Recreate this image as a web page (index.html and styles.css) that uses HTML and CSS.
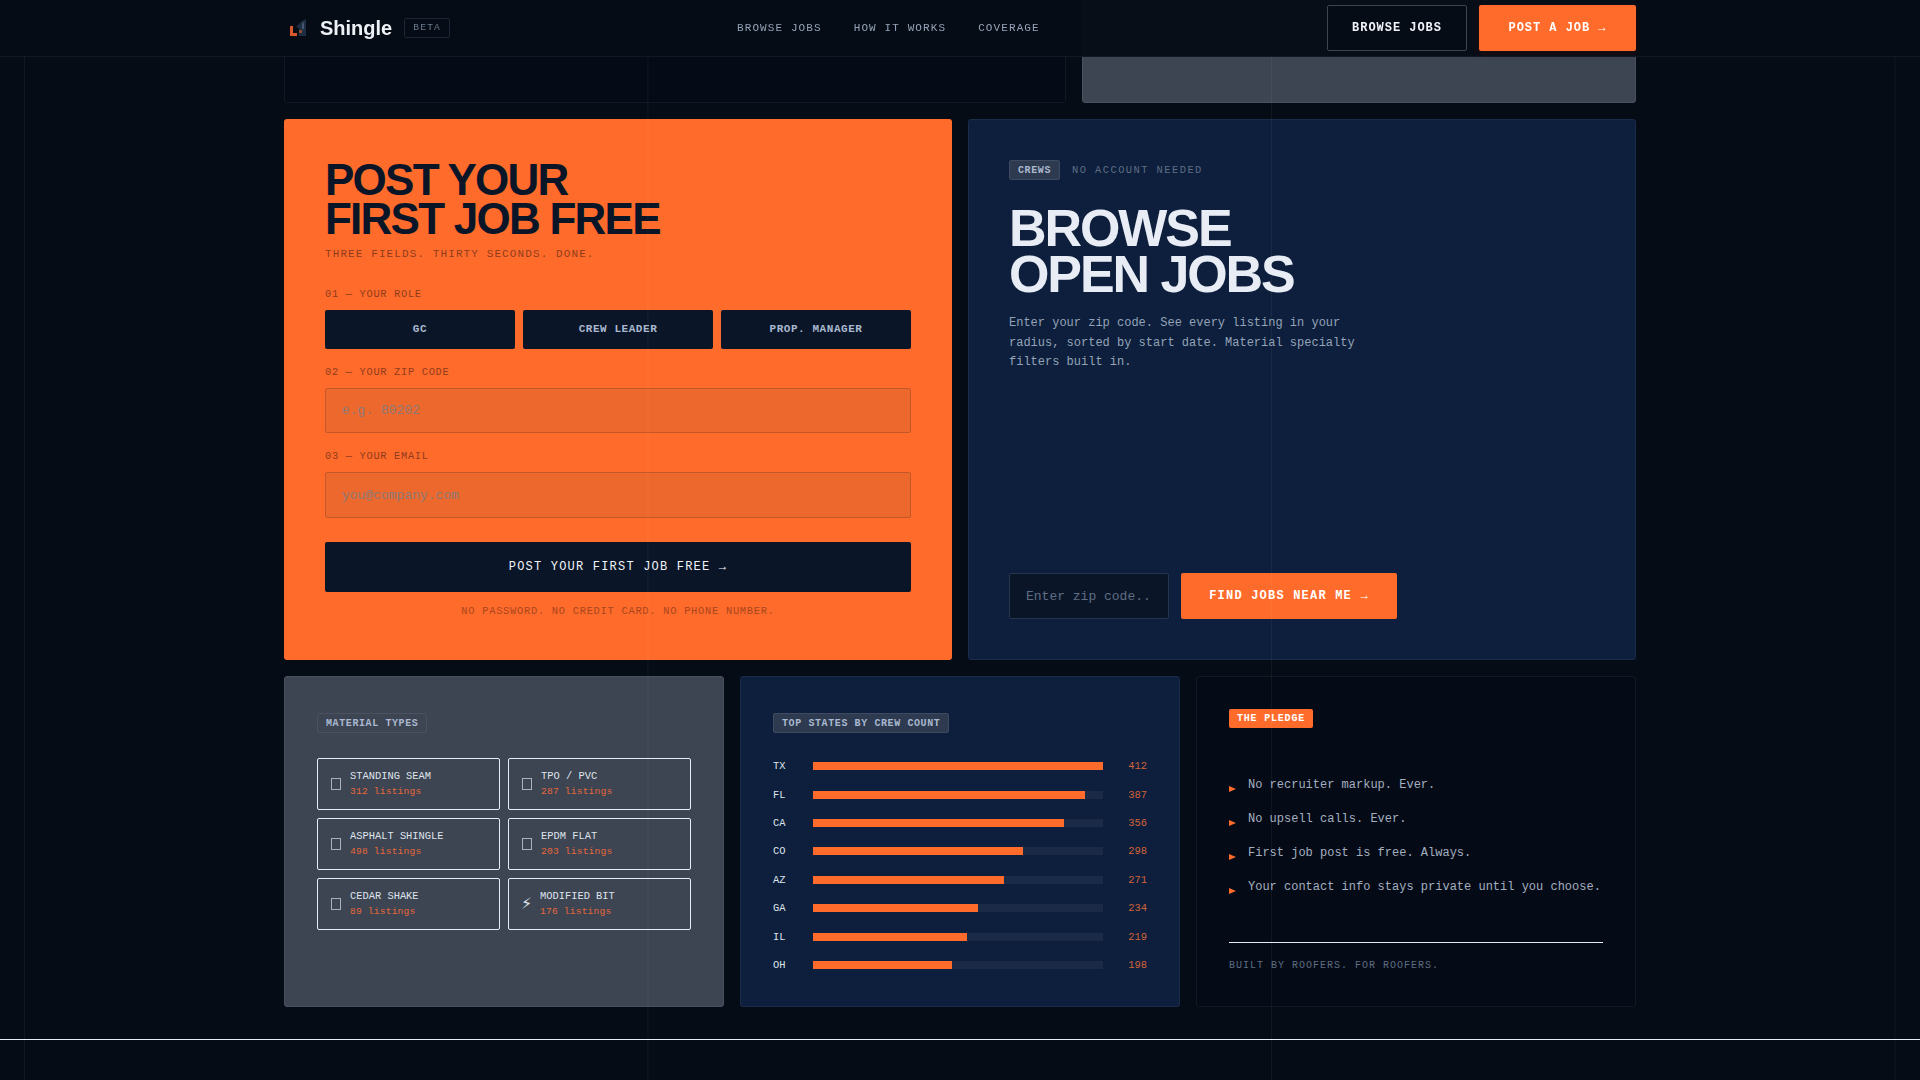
FILE: index.html
```html
<!DOCTYPE html>
<html lang="en">
<head>
  <meta charset="UTF-8" />
  <meta name="viewport" content="width=device-width, initial-scale=1.0" />
  <title>Shingle</title>
  <link rel="stylesheet" href="styles.css">
</head>
<body>
  <div class="grid-lines"></div>

  <nav class="nav">
    <div class="nav-inner">
      <div class="brand">
        <svg class="logo" width="20" height="20" viewBox="0 0 20 20">
          <path d="M8 9 L14 3 L18 1 V18 H11 V10 Z" fill="#1f2d42" />
          <path d="M14 6 L16 4 V11 H14 Z" fill="#46566e" />
          <path d="M2 8 H5 V15 H9 V18 H2 Z" fill="#d9592a" />
          <path d="M11 12 H14 V15 H11 Z" fill="#8a4a2c" />
        </svg>
        <span class="brand-name">Shingle</span>
        <span class="beta">BETA</span>
      </div>
      <div class="nav-links">
        <a>BROWSE JOBS</a>
        <a>HOW IT WORKS</a>
        <a>COVERAGE</a>
      </div>
      <div class="nav-actions">
        <button class="btn btn-outline">BROWSE JOBS</button>
        <button class="btn btn-orange">POST A JOB →</button>
      </div>
    </div>
  </nav>

  <main class="page">
    <section class="row row-stub">
      <div class="card card-dark"></div>
      <div class="card card-gray"></div>
    </section>

    <section class="row row-two">
      <div class="card card-orange">
        <h2 class="post-title">POST YOUR<br>FIRST JOB FREE</h2>
        <p class="post-sub">THREE FIELDS. THIRTY SECONDS. DONE.</p>

        <label class="field-label">01 — YOUR ROLE</label>
        <div class="roles">
          <button>GC</button>
          <button>CREW LEADER</button>
          <button>PROP. MANAGER</button>
        </div>

        <label class="field-label">02 — YOUR ZIP CODE</label>
        <input class="field" type="text" placeholder="e.g. 80202" />

        <label class="field-label">03 — YOUR EMAIL</label>
        <input class="field field-last" type="text" placeholder="you@company.com" />

        <button class="submit">POST YOUR FIRST JOB FREE →</button>
        <p class="post-note">NO PASSWORD. NO CREDIT CARD. NO PHONE NUMBER.</p>
      </div>

      <div class="card card-navy browse">
        <div class="browse-top">
          <span class="tag tag-slate">CREWS</span>
          <span class="browse-hint">NO ACCOUNT NEEDED</span>
        </div>
        <h2 class="browse-title">BROWSE<br>OPEN JOBS</h2>
        <p class="browse-text">Enter your zip code. See every listing in your radius, sorted by start date. Material specialty filters built in.</p>
        <div class="browse-form">
          <input class="zip" type="text" placeholder="Enter zip code..." />
          <button class="btn btn-orange find">FIND JOBS NEAR ME →</button>
        </div>
      </div>
    </section>

    <section class="row row-three">
      <div class="card card-gray panel">
        <span class="tag tag-ghost panel-tag">MATERIAL TYPES</span>
        <div class="materials">
          <div class="material"><i class="tofu"></i><div><b>STANDING SEAM</b><span>312 listings</span></div></div>
          <div class="material"><i class="tofu"></i><div><b>TPO / PVC</b><span>287 listings</span></div></div>
          <div class="material"><i class="tofu"></i><div><b>ASPHALT SHINGLE</b><span>498 listings</span></div></div>
          <div class="material"><i class="tofu"></i><div><b>EPDM FLAT</b><span>203 listings</span></div></div>
          <div class="material"><i class="tofu"></i><div><b>CEDAR SHAKE</b><span>89 listings</span></div></div>
          <div class="material"><i class="flash">⚡</i><div><b>MODIFIED BIT</b><span>176 listings</span></div></div>
        </div>
      </div>

      <div class="card card-navy panel">
        <span class="tag tag-slate panel-tag">TOP STATES BY CREW COUNT</span>
        <div class="states">
          <div class="state"><span>TX</span><div class="track"><div class="fill" style="width: 100%"></div></div><em>412</em></div>
          <div class="state"><span>FL</span><div class="track"><div class="fill" style="width: 93.9%"></div></div><em>387</em></div>
          <div class="state"><span>CA</span><div class="track"><div class="fill" style="width: 86.6%"></div></div><em>356</em></div>
          <div class="state"><span>CO</span><div class="track"><div class="fill" style="width: 72.4%"></div></div><em>298</em></div>
          <div class="state"><span>AZ</span><div class="track"><div class="fill" style="width: 65.9%"></div></div><em>271</em></div>
          <div class="state"><span>GA</span><div class="track"><div class="fill" style="width: 56.9%"></div></div><em>234</em></div>
          <div class="state"><span>IL</span><div class="track"><div class="fill" style="width: 53.2%"></div></div><em>219</em></div>
          <div class="state"><span>OH</span><div class="track"><div class="fill" style="width: 48.1%"></div></div><em>198</em></div>
        </div>
      </div>

      <div class="card card-dark panel">
        <span class="tag tag-orange">THE PLEDGE</span>
        <ul class="pledge">
          <li>No recruiter markup. Ever.</li>
          <li>No upsell calls. Ever.</li>
          <li>First job post is free. Always.</li>
          <li>Your contact info stays private until you choose.</li>
        </ul>
        <p class="pledge-foot">BUILT BY ROOFERS. FOR ROOFERS.</p>
      </div>
    </section>
  </main>

  <footer class="footer"></footer>
</body>
</html>
```

FILE: styles.css
```css
* {
  margin: 0;
  padding: 0;
  box-sizing: border-box;
}
html, body {
  height: 100%;
  overflow: hidden;
}
body {
  background: #060c16;
  color: #e8ecf4;
  font-family: 'Liberation Mono', monospace;
}
button, input {
  font-family: 'Liberation Mono', monospace;
}

/* faint vertical rules over the whole page */
.grid-lines {
  position: fixed;
  inset: 0;
  z-index: 5;
  pointer-events: none;
  background-image: linear-gradient(90deg, rgba(255, 255, 255, 0.05) 1px, transparent 1px);
  background-size: 623.5px 100%;
  background-position: 24px 0;
}

.nav {
  position: fixed;
  top: 0;
  left: 0;
  right: 0;
  z-index: 10;
  height: 57px;
  background: rgba(6, 12, 22, 0.96);
  border-bottom: 1px solid #111925;
}
.nav-inner {
  width: 1352px;
  height: 56px;
  margin: 0 auto;
  display: flex;
  align-items: center;
}
.brand {
  display: flex;
  align-items: center;
  width: 453px;
}
.logo {
  margin-left: 4px;
  margin-right: 12px;
}
.brand-name {
  font-family: 'Liberation Sans', sans-serif;
  font-size: 20px;
  font-weight: 700;
  color: #eef1f6;
}
.beta {
  margin-left: 12px;
  padding: 3px 8px;
  height: 20px;
  border: 1px solid #1c2636;
  border-radius: 2px;
  font-size: 9.6px;
  line-height: 12px;
  letter-spacing: 0.125em;
  color: #6b7a90;
}
.nav-links {
  display: flex;
  gap: 32px;
  font-size: 11px;
  letter-spacing: 0.1em;
  color: #94a3b8;
}
.nav-actions {
  display: flex;
  gap: 12px;
  margin-left: auto;
}
.btn {
  height: 46px;
  padding: 0 24px;
  border-radius: 2px;
  font-size: 12px;
  font-weight: 700;
  letter-spacing: 0.08em;
  color: #f1f4f9;
}
.btn-outline {
  width: 140px;
  background: #060c16;
  border: 1px solid #3d4452;
}
.btn-orange {
  background: #ff6b2b;
  border: none;
  color: #fff;
}
.nav-actions .btn-orange {
  width: 157px;
  box-shadow: 0 2px 6px rgba(60, 10, 0, 0.5);
}

.page {
  width: 1352px;
  margin: 0 auto;
  display: flex;
  flex-direction: column;
  gap: 16px;
}
.row {
  display: grid;
  gap: 16px;
}
.row-stub {
  grid-template-columns: 782px 554px;
  height: 103px;
}
.row-two {
  grid-template-columns: 1fr 1fr;
  height: 541px;
}
.row-three {
  grid-template-columns: 1fr 1fr 1fr;
  height: 330.5px;
}
.card {
  border-radius: 3px;
  border: 1px solid transparent;
}
.card-dark {
  background: #050b16;
  border-color: #111925;
}
.card-gray {
  background: #3d4452;
  border-color: #4a5161;
}
.card-navy {
  background: #0d1f3c;
  border-color: #1a2c4a;
}

/* post a job */
.card-orange {
  background: #ff6b2b;
  padding: 40px;
}
.post-title {
  font-family: 'Liberation Sans', sans-serif;
  font-size: 44px;
  line-height: 39px;
  font-weight: 700;
  letter-spacing: -0.04em;
  color: #0a1628;
}
.post-sub {
  margin-top: 9px;
  font-size: 11px;
  line-height: 14px;
  letter-spacing: 0.1em;
  color: #8f3c1c;
}
.field-label {
  display: block;
  margin-top: 27px;
  font-size: 10.4px;
  line-height: 12px;
  letter-spacing: 0.065em;
  color: #8f3c1c;
}
.roles {
  display: grid;
  grid-template-columns: 1fr 1fr 1fr;
  gap: 8px;
  margin-top: 10px;
}
.roles button {
  height: 39px;
  padding-bottom: 1px;
  background: #0a1628;
  border: none;
  border-radius: 2px;
  font-size: 11px;
  font-weight: 700;
  letter-spacing: 0.05em;
  color: #a9b8cf;
}
.roles + .field-label {
  margin-top: 17px;
}
.field {
  display: block;
  width: 100%;
  height: 45px;
  margin-top: 10px;
  padding: 0 16px;
  background: #ec682c;
  border: 1px solid #c25828;
  border-radius: 2px;
  font-size: 13px;
  outline: none;
}
.field-last {
  height: 46px;
}
.field + .field-label {
  margin-top: 17px;
}
.field::placeholder {
  color: #8c7a78;
}
.submit {
  display: block;
  width: 100%;
  height: 50px;
  margin-top: 24px;
  background: #0a1628;
  border: none;
  border-radius: 2px;
  font-size: 12px;
  letter-spacing: 0.1em;
  color: #f1f4f9;
}
.post-note {
  margin-top: 13px;
  text-align: center;
  font-size: 10.4px;
  line-height: 12px;
  letter-spacing: 0.07em;
  color: #a8461e;
}

/* browse jobs */
.browse {
  padding: 40px;
  display: flex;
  flex-direction: column;
}
.browse-top {
  display: flex;
  align-items: center;
  gap: 12px;
}
.browse-hint {
  font-size: 10.4px;
  letter-spacing: 0.14em;
  color: #5f6d84;
}
.tag {
  display: inline-block;
  height: 20px;
  padding: 0 8px;
  border-radius: 2px;
  font-size: 10px;
  line-height: 19px;
  font-weight: 700;
  letter-spacing: 0.06em;
}
.tag-slate {
  background: #2e3a4f;
  border: 1px solid #3d4a60;
  color: #a9b8cf;
}
.tag-ghost {
  border: 1px solid #4a5161;
  color: #a9b8cf;
}
.tag-orange {
  background: #ff6b2b;
  color: #fff;
  padding: 0 8px;
  height: 19px;
  line-height: 19px;
  letter-spacing: 0.08em;
}
.browse-title {
  margin-top: 25px;
  font-family: 'Liberation Sans', sans-serif;
  font-size: 52px;
  line-height: 46px;
  font-weight: 700;
  letter-spacing: -0.04em;
  color: #e8ecf4;
}
.browse-text {
  max-width: 360px;
  margin-top: 17px;
  font-size: 12px;
  line-height: 19.6px;
  color: #94a3b8;
}
.browse-form {
  display: flex;
  gap: 12px;
  margin-top: auto;
  margin-bottom: 0;
}
.zip {
  width: 160px;
  height: 46px;
  padding: 0 16px;
  background: #0a1628;
  border: 1px solid #27344b;
  border-radius: 2px;
  font-size: 13px;
  color: #e8ecf4;
  outline: none;
}
.zip::placeholder {
  color: #5f6d84;
}
.find {
  width: 216px;
  padding: 0;
  font-size: 12px;
  letter-spacing: 0.1em;
}

/* bottom panels */
.panel {
  padding: 31px 32px 32px;
}
.panel-tag {
  margin-top: 5px;
}
.materials {
  display: grid;
  grid-template-columns: 1fr 1fr;
  gap: 8px;
  margin-top: 25px;
}
.material {
  display: flex;
  align-items: center;
  height: 52px;
  padding-left: 13px;
  gap: 9px;
  border: 1px solid #e8ecf4;
  border-radius: 2px;
}
.material b {
  display: block;
  font-size: 10.4px;
  line-height: 15px;
  font-weight: 400;
  color: #dfe4ec;
}
.material span {
  display: block;
  font-size: 9.6px;
  line-height: 15px;
  letter-spacing: 0.02em;
  color: #e8683a;
}
.tofu {
  width: 10px;
  height: 12px;
  border: 1px solid #a9b1bf;
}
.flash {
  width: 10px;
  margin-left: -1px;
  font-family: 'DejaVu Sans', sans-serif;
  font-style: normal;
  font-size: 16px;
  line-height: 16px;
  color: #dfe4ec;
}

.states {
  display: flex;
  flex-direction: column;
  gap: 16px;
  margin-top: 27px;
}
.state {
  display: grid;
  grid-template-columns: 28px 1fr 32px;
  gap: 12px;
  align-items: center;
  height: 12.4px;
  font-size: 10.4px;
}
.state span {
  color: #dfe4ec;
}
.state em {
  font-style: normal;
  text-align: right;
  color: #d2643a;
}
.track {
  height: 8px;
  background: #1a2a47;
}
.fill {
  height: 100%;
  background: #ff6b2b;
}

.pledge {
  list-style: none;
  margin-top: 48px;
  display: flex;
  flex-direction: column;
  gap: 16px;
}
.pledge li {
  position: relative;
  padding-left: 19px;
  font-size: 12px;
  line-height: 18px;
  color: #a3afc0;
}
.pledge li::before {
  content: "";
  position: absolute;
  left: 0;
  top: 10px;
  border-left: 7px solid #ff6b2b;
  border-top: 3.5px solid transparent;
  border-bottom: 3.5px solid transparent;
}
.pledge-foot {
  margin-top: 46px;
  padding-top: 16px;
  border-top: 1px solid #e8ecf4;
  font-size: 10px;
  line-height: 14px;
  letter-spacing: 0.1em;
  color: #5f6d84;
}

.footer {
  margin-top: 32.5px;
  height: 41px;
  border-top: 1px solid #e8ecf4;
}
```
